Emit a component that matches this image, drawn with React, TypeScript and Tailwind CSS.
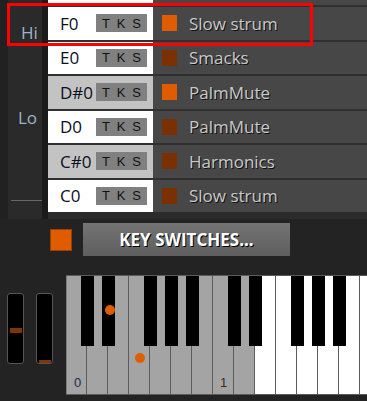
import React from "react";

type Row = { note: string; sharp: boolean; label: string; bright: boolean; hidden?: boolean };

const rows: Row[] = [
  { note: "", sharp: false, label: "", bright: false, hidden: true },
  { note: "F0", sharp: false, label: "Slow strum", bright: true },
  { note: "E0", sharp: false, label: "Smacks", bright: false },
  { note: "D#0", sharp: true, label: "PalmMute", bright: true },
  { note: "D0", sharp: false, label: "PalmMute", bright: false },
  { note: "C#0", sharp: true, label: "Harmonics", bright: false },
  { note: "C0", sharp: false, label: "Slow strum", bright: false },
];

const whiteKeys = Array.from({ length: 15 }, (_, i) => i);
const blackLefts = [15, 36, 78, 99, 120, 162, 183, 225, 246, 267];

function Slider({ markerTop, markerH }: { markerTop: number; markerH: number }) {
  return (
    <div className="relative w-[17px] h-[71px] bg-black border border-[#565656] rounded-[3px]">
      <div
        className="absolute left-[2px] w-[12px] bg-[#7e3606]"
        style={{ top: markerTop, height: markerH }}
      />
    </div>
  );
}

export default function App() {
  const font = { fontFamily: "'Open Sans', 'Liberation Sans', sans-serif" };
  return (
    <div className="relative w-[367px] h-[401px] overflow-hidden bg-[#232323]" style={font}>
      {/* top section */}
      <div className="flex h-[219px]">
        <div className="relative w-[42px] h-full border-l-[8px] border-[#212121] bg-[#2a2a2a]">
          <div className="absolute left-[13px] top-[21px] text-[17px] leading-[24px] text-[#9fb3c8]">Hi</div>
          <div className="absolute left-[10px] top-[106px] text-[17px] leading-[24px] text-[#9fb3c8]">Lo</div>
          <div className="absolute left-[3px] right-0 top-[200px] h-[1px] bg-[#676767]" />
        </div>
        <div className="flex-1 h-full overflow-hidden border-l-[6px] border-[#1b1b1b] bg-[#2b2b2b]">
          <div className="flex flex-col gap-[2px] mt-[-27.5px] bg-[#303030]">
            {rows.map((r, i) => (
              <div key={i} className="flex h-[32.5px]">
                <div
                  className={
                    "flex items-center w-[105px] pl-[12px] pr-[6px] " +
                    (r.sharp ? "bg-[#c3c3c3]" : "bg-white")
                  }
                >
                  {!r.hidden && (
                    <>
                      <span className="text-[17px] text-[#0a0f1e]">{r.note}</span>
                      <div
                        className="ml-auto flex items-center justify-between px-[6px] w-[51px] h-[18px] bg-[#808080] text-[13px] text-[#111]"
                        style={{ fontFamily: "'Liberation Sans', sans-serif" }}
                      >
                        <span>T</span>
                        <span>K</span>
                        <span>S</span>
                      </div>
                    </>
                  )}
                </div>
                <div className="flex flex-1 items-center bg-[#474747]">
                  {!r.hidden && (
                    <>
                      <div
                        className={
                          "ml-[9px] w-[15px] h-[16px] " +
                          (r.bright ? "bg-[#e05c00]" : "bg-[#7a3000]")
                        }
                      />
                      <span
                        className="ml-[12px] text-[17px] text-[#c9c9c9]"
                        style={{ textShadow: "1px 1px 0 #111" }}
                      >
                        {r.label}
                      </span>
                    </>
                  )}
                </div>
              </div>
            ))}
          </div>
        </div>
      </div>

      {/* middle section */}
      <div className="flex items-start h-[56px]">
        <div className="ml-[50px] mt-[10px] w-[22px] h-[22px] bg-[#e05c00] border border-[#9a4000]" />
        <div className="ml-[11px] mt-[4px] w-[207px] h-[33px] flex items-center justify-center bg-gradient-to-b from-[#747474] to-[#5e5e5e]">
          <span
            className="text-[17px] font-bold text-white"
            style={{ textShadow: "1px 1px 0 #000" }}
          >
            KEY SWITCHES...
          </span>
        </div>
      </div>

      {/* bottom section */}
      <div className="flex h-[126px]">
        <div className="w-[66px] flex gap-[12px] pl-[7px] pt-[18px]">
          <Slider markerTop={34} markerH={5} />
          <Slider markerTop={66} markerH={3} />
        </div>
        <div className="relative flex-1 h-[120px] overflow-hidden border-t border-b border-[#5a5a5a]">
          <div className="flex h-full">
            {whiteKeys.map((k) => (
              <div
                key={k}
                className={
                  "relative shrink-0 w-[21px] h-full border-r border-[#5c5c5c] " +
                  (k < 9 ? "bg-[#a4a4a4]" : "bg-white") +
                  (k === 0 ? " border-l border-l-[#7a7a7a]" : "")
                }
              >
                {k === 0 && (
                  <span
                    className="absolute left-[7px] top-[97px] text-[13px] text-[#1c2c50]"
                    style={{ fontFamily: "'Liberation Sans', sans-serif" }}
                  >
                    0
                  </span>
                )}
                {k === 7 && (
                  <span
                    className="absolute left-[7px] top-[97px] text-[13px] text-[#3a2a1a]"
                    style={{ fontFamily: "'Liberation Sans', sans-serif" }}
                  >
                    1
                  </span>
                )}
              </div>
            ))}
          </div>
          {blackLefts.map((l) => (
            <div
              key={l}
              className="absolute top-0 w-[13px] h-[70px] bg-black"
              style={{ left: l }}
            />
          ))}
          <div className="absolute left-[39px] top-[29px] w-[10px] h-[10px] rounded-full bg-[#e05c00]" />
          <div className="absolute left-[69px] top-[77px] w-[10px] h-[10px] rounded-full bg-[#e05c00]" />
        </div>
      </div>

      {/* highlight */}
      <div className="absolute left-[7px] top-[3px] w-[306px] h-[43px] border-[3px] border-[#ff0000]" />
    </div>
  );
}
